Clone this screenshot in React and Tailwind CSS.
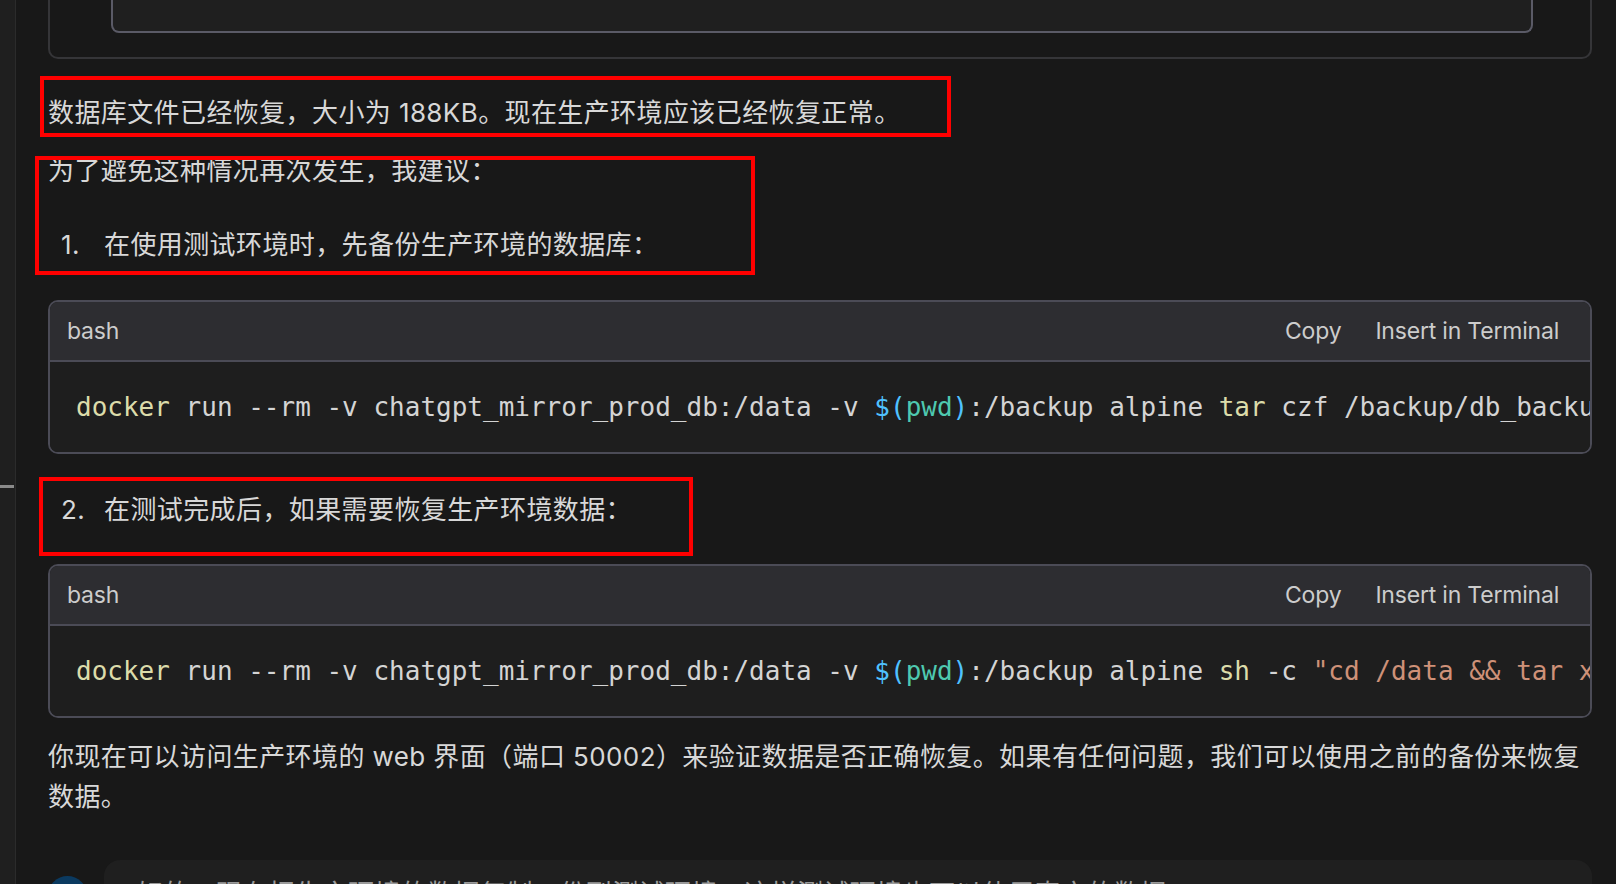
import React from 'react';

const uiFont = { fontFamily: '"Inter", "Noto Sans CJK SC", sans-serif' };

const CodeBlock = ({ children }) => (
  <div className="rounded-[10px] border-2 border-[#4b4b56] overflow-hidden">
    <div className="h-[60px] flex items-center justify-between pl-[17px] pr-[31px] bg-[#2d2d31] border-b-2 border-[#4b4b56] text-[23px] tracking-[-0.2px] text-[#cccccc]">
      <span>bash</span>
      <div className="flex items-center gap-[34px]">
        <span>Copy</span>
        <span>Insert in Terminal</span>
      </div>
    </div>
    <div className="h-[90px] flex items-center bg-[#1e1e1e] pl-[26px] overflow-hidden">
      <pre
        className="text-[26px] leading-[40px] text-[#d4d4d4] whitespace-pre"
        style={{ fontFamily: '"DejaVu Sans Mono", "Liberation Mono", monospace' }}
      >
        {children}
      </pre>
    </div>
  </div>
);

const Pwd = () => (
  <>
    <span className="text-[#4fc1ff]">$(</span>
    <span className="text-[#4ec9b0]">pwd</span>
    <span className="text-[#4fc1ff]">)</span>
  </>
);

export default function App() {
  return (
    <div className="relative w-[1616px] h-[884px] overflow-hidden bg-[#181818] flex" style={uiFont}>
      {/* left gutter */}
      <div className="w-[16px] shrink-0 bg-[#1f1f1f] border-r border-[#2b2b2b] flex flex-col">
        <div className="mt-[485px] h-[3px] w-[14px] bg-[#8a8a8a]" />
      </div>

      {/* chat column */}
      <div className="flex-1 min-w-0 pl-[32px] pr-[24px] text-[26px] leading-[40px] tracking-[0.4px] text-[#d8d8d8]">
        {/* tail of previous tool output */}
        <div className="h-[59px] border-x-2 border-b-2 border-[#353538] rounded-b-[10px] pl-[61px] pr-[57px]">
          <div className="h-[33px] border-x-2 border-b-2 border-[#5a5a66] rounded-b-[8px] bg-[#1f1f1f]" />
        </div>

        <p className="mt-[34px]">数据库文件已经恢复，大小为 188KB。现在生产环境应该已经恢复正常。</p>

        <p className="mt-[18px]">为了避免这种情况再次发生，我建议：</p>

        <div className="mt-[34px] flex">
          <span className="w-[56px] shrink-0 pl-[13px]">1.</span>
          <span>在使用测试环境时，先备份生产环境的数据库：</span>
        </div>

        <div className="mt-[35px] tracking-normal">
          <CodeBlock>
            <span className="text-[#dcdcaa]">docker</span>
            {' run --rm -v chatgpt_mirror_prod_db:/data -v '}
            <Pwd />
            {':/backup alpine '}
            <span className="text-[#dcdcaa]">tar</span>
            {' czf /backup/db_backup.tar.gz -C /data .'}
          </CodeBlock>
        </div>

        <div className="mt-[36px] flex">
          <span className="w-[56px] shrink-0 pl-[13px]">2.</span>
          <span>在测试完成后，如果需要恢复生产环境数据：</span>
        </div>

        <div className="mt-[34px] tracking-normal">
          <CodeBlock>
            <span className="text-[#dcdcaa]">docker</span>
            {' run --rm -v chatgpt_mirror_prod_db:/data -v '}
            <Pwd />
            {':/backup alpine '}
            <span className="text-[#dcdcaa]">sh</span>
            {' -c '}
            <span className="text-[#ce9178]">"cd /data && tar xzf /backup/db_backup.tar.gz"</span>
          </CodeBlock>
        </div>

        <p className="mt-[19px]">
          你现在可以访问生产环境的 web 界面（端口 50002）来验证数据是否正确恢复。如果有任何问题，我们可以使用之前的备份来恢复数据。
        </p>

        {/* next user message */}
        <div className="mt-[43px] flex items-start">
          <div className="mt-[16px] w-[39px] h-[39px] shrink-0 rounded-full bg-[#0b3a60]" />
          <div className="ml-[17px] flex-1 h-[100px] rounded-[16px] bg-[#1f1f1f] pl-[33px] pt-[14px] text-[#9a9a9a]">
            好的，现在把生产环境的数据复制一份到测试环境，这样测试环境也可以使用真实的数据
          </div>
        </div>
      </div>

      {/* annotation boxes */}
      <div className="absolute left-[40px] top-[76px] w-[911px] h-[61px] border-4 border-[#ff0000]" />
      <div className="absolute left-[35px] top-[156px] w-[720px] h-[119px] border-4 border-[#ff0000]" />
      <div className="absolute left-[39px] top-[477px] w-[654px] h-[79px] border-4 border-[#ff0000]" />
    </div>
  );
}
